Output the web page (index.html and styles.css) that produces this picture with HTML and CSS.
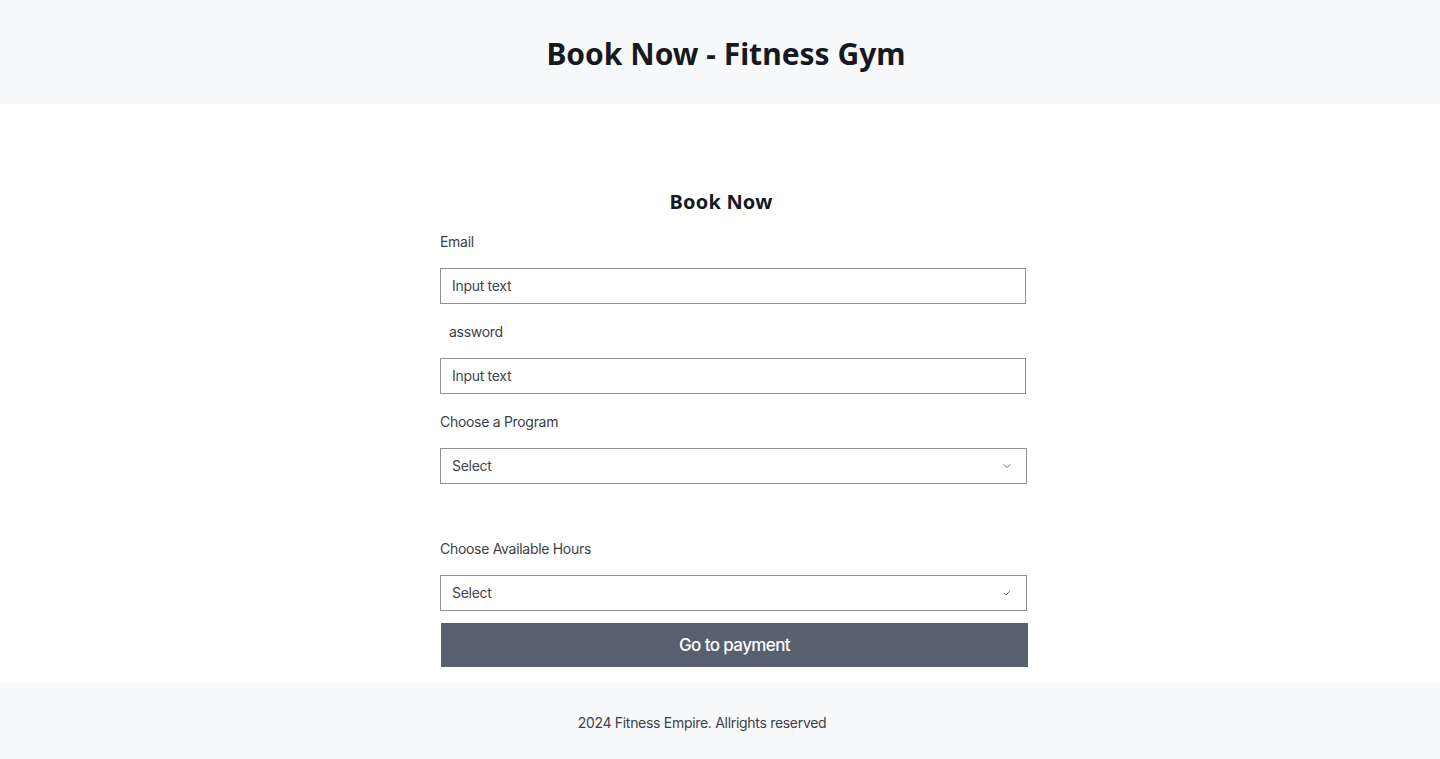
FILE: index.html
```html
<!DOCTYPE html>
<html lang="en">
<head>
<meta charset="utf-8">
<title>Book Now - Fitness Gym</title>
<link rel="stylesheet" href="styles.css">
</head>
<body>
<header class="site-header">
  <h1 class="site-title">Book Now - Fitness Gym</h1>
</header>
<main class="main">
  <form class="booking-form">
    <h2 class="form-title">Book Now</h2>
    <label class="field-label">Email</label>
    <div class="text-input">Input text</div>
    <label class="field-label field-label--indent">assword</label>
    <div class="text-input">Input text</div>
    <label class="field-label">Choose a Program</label>
    <div class="select-input">
      <span>Select</span>
      <svg class="select-icon" width="10" height="10" viewBox="0 0 10 10"><path d="M1.5 3.5 L5 6.5 L8.5 3.5" fill="none" stroke="#6b6f78" stroke-width="0.9"/></svg>
    </div>
    <label class="field-label field-label--spaced">Choose Available Hours</label>
    <div class="select-input select-input--last">
      <span>Select</span>
      <svg class="select-icon" width="10" height="10" viewBox="0 0 10 10"><path d="M2 5.2 L4 7 L8 3" fill="none" stroke="#6b6f78" stroke-width="0.9"/></svg>
    </div>
    <button type="button" class="pay-button">Go to payment</button>
  </form>
</main>
<footer class="site-footer">
  <p class="footer-text">2024 Fitness Empire. Allrights reserved</p>
</footer>
</body>
</html>
```

FILE: styles.css
```css
* { box-sizing: border-box; }
html, body { margin: 0; padding: 0; }
body {
  font-family: "Inter", "Noto Sans", sans-serif;
  color: #1b1e22;
  background: #ffffff;
}
.site-header {
  height: 104px;
  background: #f8f9fa;
  display: flex;
  align-items: center;
  justify-content: center;
  padding-left: 12px;
  padding-top: 2px;
}
.site-title {
  margin: 0;
  font-family: "Noto Sans", sans-serif;
  font-size: 30px;
  font-weight: 700;
  color: #16191d;
  letter-spacing: 0;
}
.main {
  padding: 86px 0 16px;
  display: flex;
  justify-content: center;
}
.booking-form {
  width: 588px;
  margin-left: 28px;
  display: flex;
  flex-direction: column;
}
.form-title {
  margin: 0 0 18px;
  text-align: center;
  font-family: "Noto Sans", sans-serif;
  font-size: 20px;
  font-weight: 700;
  line-height: 24px;
  color: #16191d;
  padding-right: 26px;
  letter-spacing: 0.2px;
}
.field-label {
  font-size: 14px;
  line-height: 20px;
  color: #3d4046;
  letter-spacing: -0.3px;
  margin-bottom: 16px;
}
.field-label--indent { padding-left: 9px; }
.text-input, .select-input {
  height: 36px;
  border: 1px solid #8f9099;
  padding: 0 11px 1px;
  font-size: 14px;
  color: #43464c;
  letter-spacing: -0.3px;
  display: flex;
  align-items: center;
  margin-bottom: 18px;
}
.text-input { width: 586px; }
.select-input {
  width: 587px;
  justify-content: space-between;
  padding-right: 14px;
}
.select-icon { display: block; }
.field-label--spaced { margin-top: 37px; }
.select-input--last { margin-bottom: 12px; }
.pay-button {
  width: 587px;
  height: 44px;
  margin-left: 1px;
  border: none;
  background: #585f6e;
  color: #ffffff;
  font-family: "Inter", sans-serif;
  font-size: 17px;
  font-weight: 500;
  letter-spacing: -0.6px;
  padding: 0;
  cursor: pointer;
}
.site-footer {
  height: 76px;
  background: #f8f9fa;
  display: flex;
  justify-content: center;
  padding-top: 30px;
  padding-right: 36px;
}
.footer-text {
  margin: 0;
  font-size: 14px;
  line-height: 20px;
  color: #3d4046;
  letter-spacing: -0.3px;
}
```
